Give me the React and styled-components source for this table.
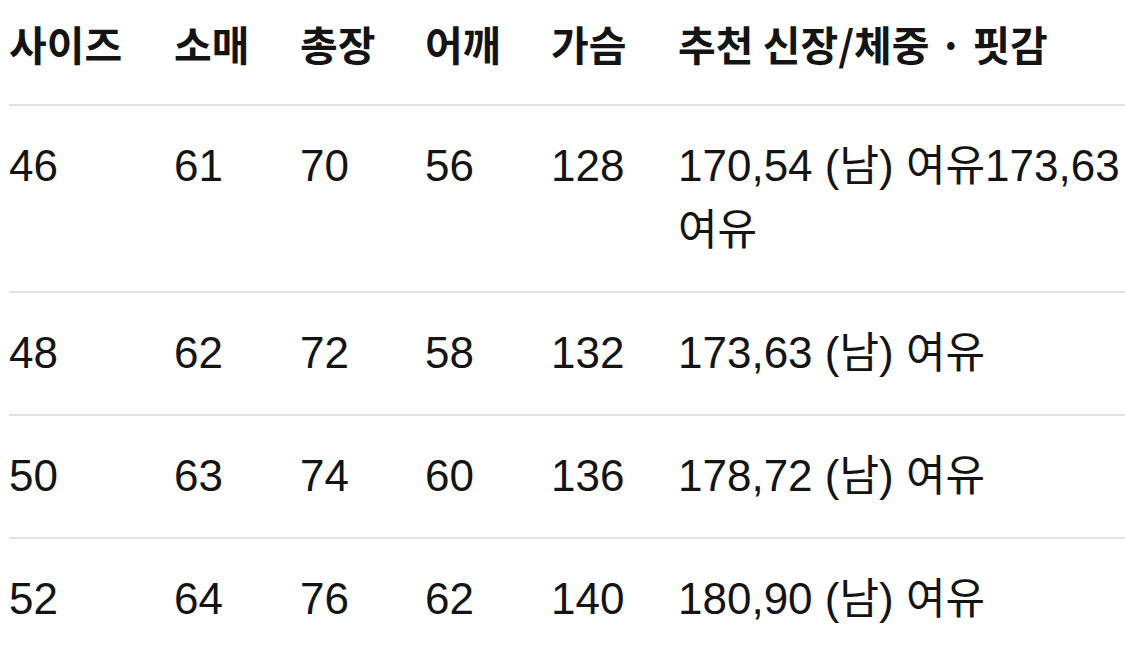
import React from "react";
import styled, { createGlobalStyle } from "styled-components";

const GlobalStyle = createGlobalStyle`
  html, body {
    margin: 0;
    padding: 0;
    background: #ffffff;
  }
  body {
    font-family: "Liberation Sans", "Noto Sans CJK KR", sans-serif;
    color: #141414;
    overflow: hidden;
  }
`;

const headers = ["사이즈", "소매", "총장", "어깨", "가슴", "추천 신장/체중 · 핏감"];

const rows = [
  ["46", "61", "70", "56", "128", "170,54 (남) 여유173,63 여유"],
  ["48", "62", "72", "58", "132", "173,63 (남) 여유"],
  ["50", "63", "74", "60", "136", "178,72 (남) 여유"],
  ["52", "64", "76", "62", "140", "180,90 (남) 여유"],
];

// hangul runs get their own (narrower) size so they sit like the original font
const withHangul = (text) =>
  text
    .split(/([\uAC00-\uD7A3]+)/)
    .map((part, i) =>
      /[\uAC00-\uD7A3]/.test(part) ? <Hangul key={i}>{part}</Hangul> : part
    );

const App = () => {
  return (
    <>
      <GlobalStyle />
      <Table>
        <HeadRow>
          {headers.map((h) => (
            <HeadCell key={h}>{h}</HeadCell>
          ))}
        </HeadRow>
        {rows.map((row) => (
          <Row key={row[0]}>
            {row.map((cell, i) => (
              <Cell key={i}>{withHangul(cell)}</Cell>
            ))}
          </Row>
        ))}
      </Table>
    </>
  );
};

export default App;

const Table = styled.div`
  display: flex;
  flex-direction: column;
  padding-left: 9px;
  width: 1116px;
`;

const Row = styled.div`
  display: grid;
  grid-template-columns: 165px 126px 125px 126px 127px 1fr;
  align-items: start;
  border-bottom: 2px solid #e3e3e3;
  padding: 28px 0 29px;
`;

const HeadRow = styled(Row)`
  padding: 11px 0 29px;
`;

const HeadCell = styled.div`
  font-family: "Noto Sans CJK KR", sans-serif;
  font-weight: 700;
  font-size: 41px;
  line-height: 64px;
  white-space: nowrap;
`;

const Cell = styled.div`
  font-size: 44px;
  line-height: 64px;
  word-break: keep-all;
`;

const Hangul = styled.span`
  font-family: "Noto Sans CJK KR", sans-serif;
  font-size: 43px;
  line-height: 0;
`;
